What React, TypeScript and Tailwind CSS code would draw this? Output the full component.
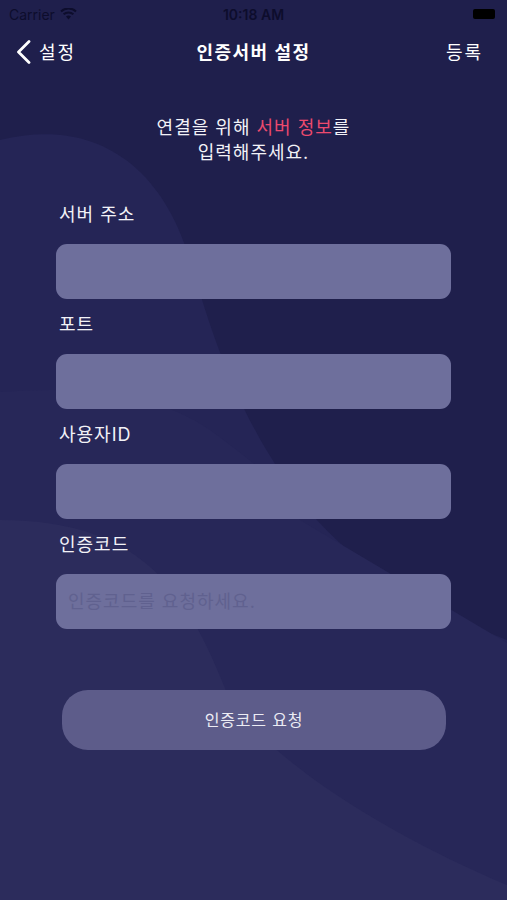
import React from "react";

const font = { fontFamily: 'Inter, "Noto Sans CJK KR", sans-serif' };

function Field({ label, placeholder }: { label: string; placeholder?: string }) {
  return (
    <div className="flex flex-col">
      <div className="h-[24px] leading-[24px] text-[18px] tracking-[1px] text-[#f2f2f7] pl-[3px]">{label}</div>
      <div className="mt-[17px] h-[55px] rounded-[11px] bg-[#6e6f9c] flex items-center pl-[12px]">
        {placeholder && <span className="text-[18px] tracking-[1px] text-[#60618f]">{placeholder}</span>}
      </div>
    </div>
  );
}

export default function App() {
  return (
    <div className="relative w-[507px] h-[900px] overflow-hidden bg-[#1f1f4c]" style={font}>
      <svg className="absolute inset-0" width="507" height="900" viewBox="0 0 507 900">
        <path d="M0,140 C90,118 160,160 190,260 C215,345 240,420 300,500 C355,570 430,610 507,640 L507,900 L0,900 Z" fill="#252556" />
        <path d="M0,392 C90,385 160,395 210,430 C250,460 280,480 300,520 L507,643 L507,900 L0,900 Z" fill="#272758" />
        <path d="M0,520 C150,520 190,600 230,700 C280,770 400,840 507,885 L507,900 L0,900 Z" fill="#2c2c5c" />
      </svg>

      <div className="relative flex flex-col">
        {/* status bar */}
        <div className="h-[28px] flex items-center justify-between px-[9px] text-[#0d0d2c]">
          <div className="flex items-center gap-[5px] w-[120px]">
            <span className="text-[14px]">Carrier</span>
            <svg width="17" height="12" viewBox="0 0 17 12">
              <path d="M8.5 11.5 L6 8.6 A4 4 0 0 1 11 8.6 Z" fill="#0d0d2c" />
              <path d="M3.6 6.2 A7.5 7.5 0 0 1 13.4 6.2" stroke="#0d0d2c" strokeWidth="2" fill="none" />
              <path d="M1 3.4 A11 11 0 0 1 16 3.4" stroke="#0d0d2c" strokeWidth="2" fill="none" />
            </svg>
          </div>
          <span className="text-[14px] font-semibold">10:18 AM</span>
          <div className="w-[120px] flex justify-end pr-[3px]">
            <div className="w-[22px] h-[10px] rounded-[2px] bg-black" />
          </div>
        </div>

        {/* nav bar */}
        <div className="h-[48px] flex items-center justify-between px-[16px] text-white">
          <div className="flex items-center gap-[8px] w-[100px]">
            <svg width="15" height="24" viewBox="0 0 15 24">
              <path d="M13 1.5 L2.5 12 L13 22.5" stroke="white" strokeWidth="2.8" fill="none" strokeLinecap="round" strokeLinejoin="round" />
            </svg>
            <span className="text-[18px] tracking-[2px]">설정</span>
          </div>
          <span className="text-[18px] font-bold tracking-[1.5px]">인증서버 설정</span>
          <div className="w-[100px] flex justify-end pr-[8px]">
            <span className="text-[18px] tracking-[2px]">등록</span>
          </div>
        </div>

        {/* intro */}
        <div className="mt-[39px] text-center text-[18px] tracking-[1px] leading-[25px] text-[#f2f2f7]">
          <div>
            연결을 위해 <span className="text-[#ec4a6e]">서버 정보</span>를
          </div>
          <div>입력해주세요.</div>
        </div>

        {/* fields */}
        <div className="mt-[38px] mx-[56px] flex flex-col gap-[14px]">
          <Field label="서버 주소" />
          <Field label="포트" />
          <Field label="사용자ID" />
          <Field label="인증코드" placeholder="인증코드를 요청하세요." />
        </div>

        <div className="mt-[61px] mx-[62px] w-[384px] h-[60px] rounded-[26px] bg-[#5d5c8a] flex items-center justify-center">
          <span className="text-[16px] tracking-[0.8px] text-[#ececf4]">인증코드 요청</span>
        </div>
      </div>
    </div>
  );
}
